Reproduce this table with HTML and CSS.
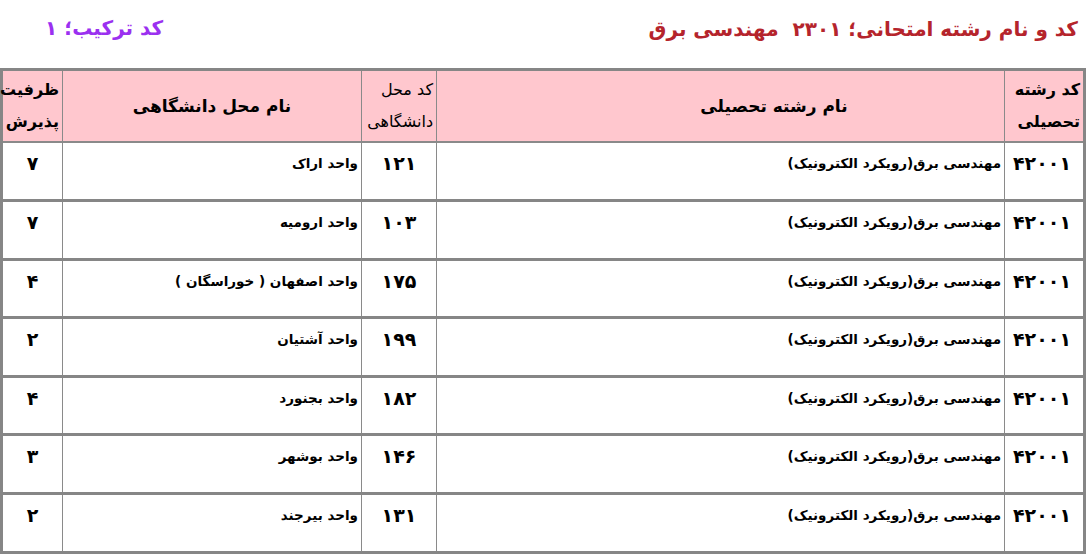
FILE: index.html
```html
<!DOCTYPE html>
<html lang="fa" dir="rtl">
<head>
<meta charset="utf-8">
<link rel="stylesheet" href="styles.css">
</head>
<body>
<div class="titles">
  <div class="title-main">کد و نام رشته امتحانی؛ ۲۳۰۱&nbsp;&nbsp;مهندسی برق</div>
  <div class="title-combo">کد ترکیب؛ ۱</div>
</div>
<table class="grid">
  <colgroup>
    <col class="c1"><col class="c2"><col class="c3"><col class="c4"><col class="c5">
  </colgroup>
  <thead>
    <tr>
      <th class="h-side">کد رشته<br>تحصیلی</th>
      <th class="h-mid h-field">نام رشته تحصیلی</th>
      <th class="h-side h-small">کد محل<br>دانشگاهی</th>
      <th class="h-mid">نام محل دانشگاهی</th>
      <th class="h-side">ظرفیت<br>پذیرش</th>
    </tr>
  </thead>
  <tbody>
    <tr><td class="num">۴۲۰۰۱</td><td class="txt">مهندسی برق(رویکرد الکترونیک)</td><td class="num center">۱۲۱</td><td class="txt">واحد اراک</td><td class="num center">۷</td></tr>
    <tr><td class="num">۴۲۰۰۱</td><td class="txt">مهندسی برق(رویکرد الکترونیک)</td><td class="num center">۱۰۳</td><td class="txt">واحد ارومیه</td><td class="num center">۷</td></tr>
    <tr><td class="num">۴۲۰۰۱</td><td class="txt">مهندسی برق(رویکرد الکترونیک)</td><td class="num center">۱۷۵</td><td class="txt">واحد اصفهان ( خوراسگان )</td><td class="num center">۴</td></tr>
    <tr><td class="num">۴۲۰۰۱</td><td class="txt">مهندسی برق(رویکرد الکترونیک)</td><td class="num center">۱۹۹</td><td class="txt">واحد آشتیان</td><td class="num center">۲</td></tr>
    <tr><td class="num">۴۲۰۰۱</td><td class="txt">مهندسی برق(رویکرد الکترونیک)</td><td class="num center">۱۸۲</td><td class="txt">واحد بجنورد</td><td class="num center">۴</td></tr>
    <tr><td class="num">۴۲۰۰۱</td><td class="txt">مهندسی برق(رویکرد الکترونیک)</td><td class="num center">۱۴۶</td><td class="txt">واحد بوشهر</td><td class="num center">۳</td></tr>
    <tr><td class="num">۴۲۰۰۱</td><td class="txt">مهندسی برق(رویکرد الکترونیک)</td><td class="num center">۱۳۱</td><td class="txt">واحد بیرجند</td><td class="num center">۲</td></tr>
  </tbody>
</table>
</body>
</html>
```
FILE: styles.css
```css
html, body {
  margin: 0;
  padding: 0;
  background: #ffffff;
}
body {
  font-family: "DejaVu Sans", "Noto Sans", sans-serif;
  color: #000;
  width: 1088px;
}
.titles {
  display: flex;
  justify-content: space-between;
  align-items: center;
  height: 68px;
  padding: 0 10px 0 45px;
  box-sizing: border-box;
}
.title-main {
  color: #b5242c;
  font-weight: bold;
  font-size: 20px;
  margin-top: -10px;
}
.title-combo {
  color: #9b30f0;
  font-weight: bold;
  font-size: 20px;
  margin-top: -12px;
}
.grid {
  border-collapse: collapse;
  margin-right: 2px;
  width: 1083px;
  table-layout: fixed;
  border: 3px solid #868686;
}
.c1 { width: 80px; }
.c2 { width: 568px; }
.c3 { width: 75px; }
.c4 { width: 299px; }
.c5 { width: 61px; }
th, td {
  border-left: 1px solid #8a8a8a;
  border-right: 1px solid #8a8a8a;
  padding: 0 3px;
}
thead th {
  background: #ffc7ce;
  height: 70px;
  font-size: 16px;
  font-weight: bold;
  line-height: 32px;
  border-bottom: 2px solid #8a8a8a;
}
.h-side { text-align: right; }
.h-small { font-weight: normal; font-size: 16px; }
.h-mid { text-align: center; font-size: 17px; }
.h-field { padding-left: 110px; }
tbody td {
  height: 58.6px;
  vertical-align: top;
  border-bottom: 3px solid #868686;
  padding-top: 9px;
  box-sizing: border-box;
}
.num {
  font-weight: bold;
  font-size: 19px;
  text-align: right;
  padding-right: 12px;
}
.num.center { text-align: center; padding-right: 3px; }
.txt {
  font-size: 13.5px;
  font-weight: bold;
  text-align: right;
  padding-top: 12px;
}
```
